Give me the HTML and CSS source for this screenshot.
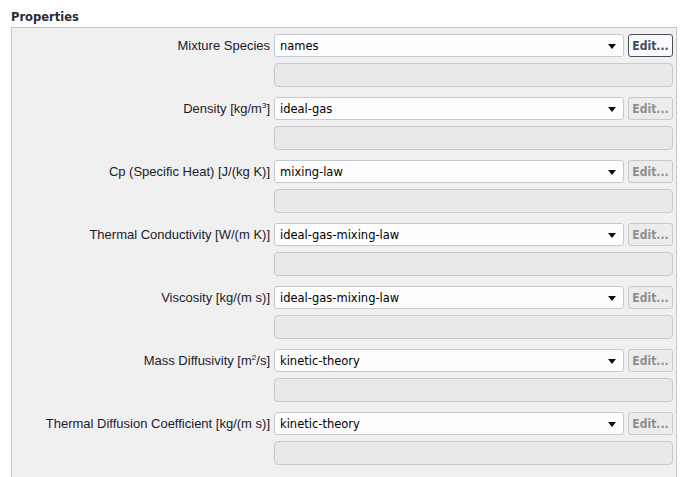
FILE: index.html
```html
<!DOCTYPE html>
<html>
  <head>
    <meta charset="UTF-8">
    <title>Properties</title>
    <link rel="stylesheet" href="styles.css">
  </head>
  <body>
    <div class="group">
      <h2 class="group-title">Properties</h2>

      <div class="panel">
        <div class="prop">
          <label class="prop-label">Mixture Species</label>
          <div class="combo"><span>names</span><i class="arrow"></i></div>
          <button class="edit edit-default">Edit...</button>
          <div class="extra"></div>
        </div>

        <div class="prop">
          <label class="prop-label">Density [kg/m<sup>3</sup>]</label>
          <div class="combo"><span>ideal-gas</span><i class="arrow"></i></div>
          <button class="edit" disabled>Edit...</button>
          <div class="extra"></div>
        </div>

        <div class="prop">
          <label class="prop-label">Cp (Specific Heat) [J/(kg K)]</label>
          <div class="combo"><span>mixing-law</span><i class="arrow"></i></div>
          <button class="edit" disabled>Edit...</button>
          <div class="extra"></div>
        </div>

        <div class="prop">
          <label class="prop-label">Thermal Conductivity [W/(m K)]</label>
          <div class="combo"><span>ideal-gas-mixing-law</span><i class="arrow"></i></div>
          <button class="edit" disabled>Edit...</button>
          <div class="extra"></div>
        </div>

        <div class="prop">
          <label class="prop-label">Viscosity [kg/(m s)]</label>
          <div class="combo"><span>ideal-gas-mixing-law</span><i class="arrow"></i></div>
          <button class="edit" disabled>Edit...</button>
          <div class="extra"></div>
        </div>

        <div class="prop">
          <label class="prop-label">Mass Diffusivity [m<sup>2</sup>/s]</label>
          <div class="combo"><span>kinetic-theory</span><i class="arrow"></i></div>
          <button class="edit" disabled>Edit...</button>
          <div class="extra"></div>
        </div>

        <div class="prop">
          <label class="prop-label">Thermal Diffusion Coefficient [kg/(m s)]</label>
          <div class="combo"><span>kinetic-theory</span><i class="arrow"></i></div>
          <button class="edit" disabled>Edit...</button>
          <div class="extra"></div>
        </div>
      </div>
    </div>
  </body>
</html>
```

FILE: styles.css
```css
body {
  margin: 0;
  background: #fff;
  font-family: 'Liberation Sans', Arial, sans-serif;
  font-size: 13px;
  color: #1b1b2b;
  overflow: hidden;
}

.group {
  padding: 10px 0 0 11px;
}

.group-title {
  margin: 0 0 2px 0;
  font-family: 'DejaVu Sans', sans-serif;
  font-size: 11.5px;
  font-weight: bold;
  line-height: 15px;
  color: #2a2a3a;
}

.panel {
  width: 666px;
  height: 460px;
  border: 1px solid #c6c6c6;
  background: #f0f0f0;
  padding: 6px 3px 0 0;
  box-sizing: border-box;
  display: flex;
  flex-direction: column;
  gap: 10px;
}

.prop {
  display: grid;
  grid-template-columns: 1fr 350px 45px;
  grid-template-rows: 23px 24px;
  column-gap: 4px;
  row-gap: 6px;
}

.prop-label {
  text-align: right;
  align-self: center;
  white-space: nowrap;
  padding-bottom: 1px;
}

.prop-label sup {
  font-size: 8px;
  line-height: 0;
}

.combo {
  display: flex;
  align-items: center;
  justify-content: space-between;
  padding: 0 7px 0 5px;
  background: #fdfdfd;
  border: 1px solid #c3c9d0;
  border-radius: 3px;
  font-family: 'DejaVu Sans', sans-serif;
  font-size: 11.5px;
  color: #000;
}

.arrow {
  width: 0;
  height: 0;
  border-left: 4.5px solid transparent;
  border-right: 4.5px solid transparent;
  border-top: 5px solid #111;
  margin-top: 1px;
}

.edit {
  margin: 0;
  padding: 0;
  font-family: 'DejaVu Sans Condensed', 'DejaVu Sans', sans-serif;
  font-size: 12px;
  font-weight: bold;
  background: #ececec;
  border: 1px solid #c9c9c9;
  border-radius: 3px;
  color: #8e8e8e;
  height: 23px;
}

.edit-default {
  background: #fafafa;
  border-color: #45505c;
  color: #3a4d63;
}

.extra {
  grid-column: 2 / 4;
  background: #e9e9e9;
  border: 1px solid #cacaca;
  border-radius: 4px;
}
```
